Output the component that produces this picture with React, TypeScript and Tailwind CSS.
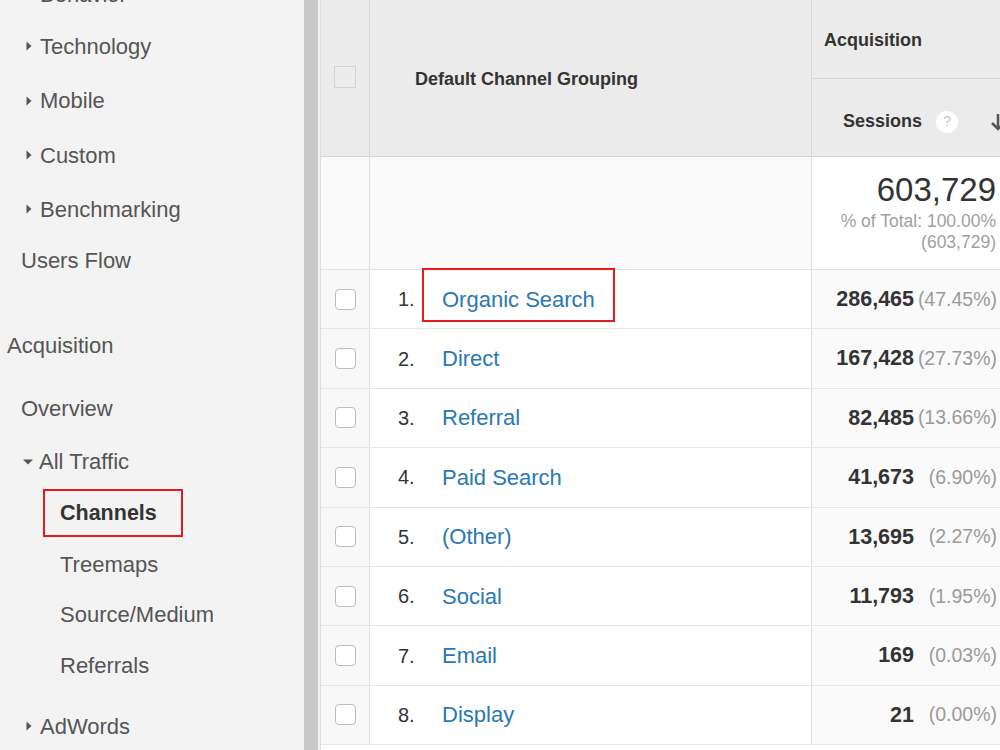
import React from "react";

type Item = {
  label: string;
  h: number;
  pl: number;
  arrow?: "right" | "down";
  bold?: boolean;
  box?: boolean;
};

const items: Item[] = [
  { label: "Behavior", h: 50, pl: 26, arrow: "right" },
  { label: "Technology", h: 54, pl: 26, arrow: "right" },
  { label: "Mobile", h: 55, pl: 26, arrow: "right" },
  { label: "Custom", h: 54, pl: 26, arrow: "right" },
  { label: "Benchmarking", h: 54, pl: 26, arrow: "right" },
  { label: "Users Flow", h: 48, pl: 21 },
];

const items2: Item[] = [
  { label: "Overview", h: 52, pl: 21 },
  { label: "All Traffic", h: 55, pl: 23, arrow: "down" },
  { label: "Channels", h: 48, pl: 43, box: true, bold: true },
  { label: "Treemaps", h: 54, pl: 60 },
  { label: "Source/Medium", h: 46, pl: 60 },
  { label: "Referrals", h: 56, pl: 60 },
  { label: "AdWords", h: 66, pl: 26, arrow: "right" },
];

function RightTri() {
  return (
    <svg width="6" height="10" viewBox="0 0 6 10" className="shrink-0">
      <path d="M0.5 0.5 L5.5 5 L0.5 9.5 Z" fill="#555" />
    </svg>
  );
}

function DownTri() {
  return (
    <svg width="10" height="6" viewBox="0 0 10 6" className="shrink-0">
      <path d="M0 0.5 L10 0.5 L5 5.5 Z" fill="#555" />
    </svg>
  );
}

function SideItem({ it }: { it: Item }) {
  if (it.box) {
    return (
      <div className="flex items-center" style={{ height: it.h }}>
        <div className="ml-[43px] w-[140px] h-full border-2 border-[#e8191d] flex items-center pl-[15px] text-[21.5px] font-bold text-[#333]">
          {it.label}
        </div>
      </div>
    );
  }
  return (
    <div
      className="flex items-center text-[22px] text-[#555]"
      style={{ height: it.h, paddingLeft: it.pl }}
    >
      {it.arrow === "right" && (
        <span className="mr-[8px] flex items-center">
          <RightTri />
        </span>
      )}
      {it.arrow === "down" && (
        <span className="mr-[6px] flex items-center">
          <DownTri />
        </span>
      )}
      <span>{it.label}</span>
    </div>
  );
}

const rows = [
  { n: "1.", name: "Organic Search", v: "286,465", p: "(47.45%)", boxed: true },
  { n: "2.", name: "Direct", v: "167,428", p: "(27.73%)" },
  { n: "3.", name: "Referral", v: "82,485", p: "(13.66%)" },
  { n: "4.", name: "Paid Search", v: "41,673", p: "(6.90%)" },
  { n: "5.", name: "(Other)", v: "13,695", p: "(2.27%)" },
  { n: "6.", name: "Social", v: "11,793", p: "(1.95%)" },
  { n: "7.", name: "Email", v: "169", p: "(0.03%)" },
  { n: "8.", name: "Display", v: "21", p: "(0.00%)" },
];

export default function App() {
  return (
    <div
      className="w-[1000px] h-[750px] overflow-hidden flex bg-white"
      style={{ fontFamily: '"Liberation Sans", Arial, sans-serif' }}
    >
      {/* Sidebar */}
      <div className="w-[304px] shrink-0 bg-[#f3f3f3] flex flex-col">
        <div className="mt-[-31px] flex flex-col">
          {items.map((it) => (
            <SideItem key={it.label} it={it} />
          ))}
          <div className="mt-[36px] h-[50px] flex items-center pl-[7px] text-[22px] text-[#555]">
            Acquisition
          </div>
          <div className="mt-[12px] flex flex-col">
            {items2.map((it) => (
              <SideItem key={it.label} it={it} />
            ))}
          </div>
        </div>
      </div>
      <div className="w-[14px] shrink-0 bg-[#c8c8c8]" />
      <div className="w-[2px] shrink-0 bg-[#f1f1f1]" />

      {/* Table */}
      <div className="flex-1 flex flex-col border-l border-[#dedede] min-w-0">
        {/* Header */}
        <div className="flex h-[157px] bg-[#ebebeb] border-b border-[#d6d6d6] shrink-0">
          <div className="w-[49px] shrink-0 border-r border-[#d9d9d9] flex justify-center pt-[66px]">
            <div className="w-[22px] h-[22px] border border-[#d3d3d3] bg-[#ececec]" />
          </div>
          <div className="w-[442px] shrink-0 border-r border-[#d9d9d9] flex items-center pl-[45px] pt-[3px] text-[18px] font-bold text-[#333]">
            Default Channel Grouping
          </div>
          <div className="w-[200px] shrink-0 flex flex-col">
            <div className="h-[79px] border-b border-[#d6d6d6] flex items-center pl-[12px] pt-[3px] text-[18px] font-bold text-[#333]">
              Acquisition
            </div>
            <div className="flex-1 flex items-center pl-[31px] pt-[8px] text-[18px] font-bold text-[#333]">
              <span>Sessions</span>
              <span className="ml-[14px] w-[22px] h-[22px] rounded-full bg-white flex items-center justify-center text-[14px] font-normal text-[#c4c4c4]">
                ?
              </span>
              <svg width="20" height="22" viewBox="0 0 20 22" className="ml-[30px]">
                <path
                  d="M10 3 L10 18 M4 12 L10 18 L16 12"
                  stroke="#555"
                  strokeWidth="2.5"
                  fill="none"
                />
              </svg>
            </div>
          </div>
        </div>

        {/* Totals row */}
        <div className="flex h-[113px] border-b border-[#e3e3e3] shrink-0">
          <div className="w-[49px] shrink-0 bg-[#fafafa] border-r border-[#dedede]" />
          <div className="w-[442px] shrink-0 bg-[#fafafa] border-r border-[#dedede]" />
          <div className="w-[189px] shrink-0 bg-white flex flex-col items-end pr-[5px] pt-[15px]">
            <div className="text-[33px] leading-[36px] text-[#333]">603,729</div>
            <div className="mt-[3px] text-[17.5px] leading-[21px] text-[#a0a0a0]">
              % of Total: 100.00%
            </div>
            <div className="text-[17.5px] leading-[21px] text-[#a0a0a0]">(603,729)</div>
          </div>
        </div>

        {/* Rows */}
        {rows.map((r) => (
          <div key={r.n} className="flex h-[59.4px] border-b border-[#e6e6e6] shrink-0">
            <div className="w-[49px] shrink-0 bg-[#f8f8f8] border-r border-[#dedede] flex items-center justify-center">
              <div className="w-[21px] h-[21px] rounded-[4px] border-[1.5px] border-[#bdbdbd] bg-white" />
            </div>
            <div className="w-[442px] shrink-0 bg-white border-r border-[#dedede] flex items-center relative">
              <span className="w-[72px] pl-[28px] text-[20px] text-[#333]">{r.n}</span>
              <span className="text-[22px] text-[#2a78b4]">{r.name}</span>
              {r.boxed && (
                <div className="absolute left-[52px] top-[-2px] w-[193px] h-[54px] border-2 border-[#e8191d]" />
              )}
            </div>
            <div className="w-[189px] shrink-0 bg-[#fafafa] flex items-center">
              <span className="w-[102px] text-right text-[21.5px] font-bold text-[#333]">{r.v}</span>
              <span className="w-[83px] text-right text-[19.5px] text-[#9a9a9a]">{r.p}</span>
            </div>
          </div>
        ))}
      </div>
    </div>
  );
}
